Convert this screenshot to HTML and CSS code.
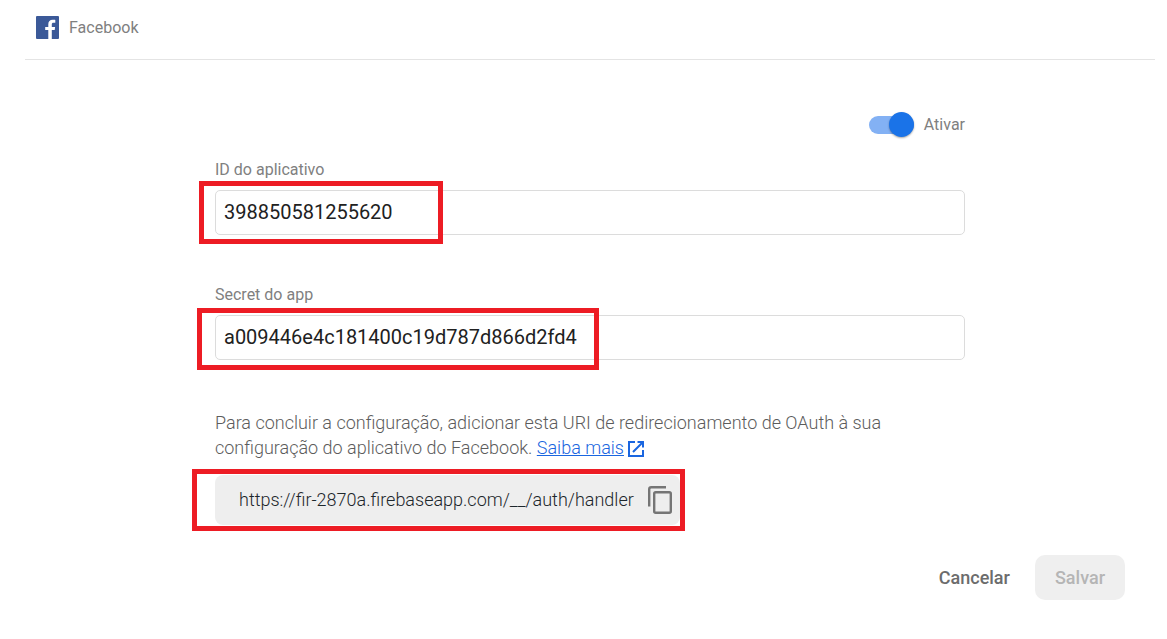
FILE: index.html
```html
<!DOCTYPE html>
<html lang="pt-BR">
<head>
<meta charset="utf-8">
<meta name="viewport" content="width=device-width, initial-scale=1">
<title>Facebook</title>
<link rel="stylesheet" href="styles.css">
</head>
<body>
<main class="provider">
  <header class="provider-header">
    <svg class="logo" viewBox="0 0 23 23" aria-hidden="true">
      <rect width="23" height="23" rx="1" fill="#3b5998"/>
      <path fill="#fff" d="M12.300 23v-9H9.200v-3h3.100V8.300c0-2.800 1.700-4.500 4.300-4.500 1.200 0 2.300.1 2.700.15v2.900h-1.700c-1.400 0-1.800.65-1.800 1.700V11h3.300l-.4 3h-2.900v9z"/>
    </svg>
    <span>Facebook</span>
  </header>
  <form class="provider-form">
    <div class="fields">
      <label class="toggle">
        <input class="switch" type="checkbox" role="switch" checked>
        <span>Ativar</span>
      </label>
      <div class="field">
        <label class="field-label" for="app-id">ID do aplicativo</label>
        <div class="marked">
          <input class="text-input" id="app-id" type="text" value="398850581255620">
          <span class="mark mark-id"></span>
        </div>
      </div>
      <div class="field">
        <label class="field-label" for="app-secret">Secret do app</label>
        <div class="marked">
          <input class="text-input" id="app-secret" type="text" value="a009446e4c181400c19d787d866d2fd4">
          <span class="mark mark-secret"></span>
        </div>
      </div>
      <p class="hint">Para concluir a configuração, adicionar esta URI de redirecionamento de OAuth à sua configuração do aplicativo do Facebook. <a class="more" href="#">Saiba mais<svg class="open-icon" viewBox="0 0 16 16" aria-hidden="true"><path fill="none" stroke="currentColor" stroke-width="2" d="M7 1H1v14h14V9M9.500 1H15v5.500M15 1 5 11"/></svg></a></p>
      <div class="uri">
        <span>https://fir-2870a.firebaseapp.com/__/auth/handler</span>
        <button class="copy" type="button" aria-label="Copiar">
          <svg class="copy-icon" viewBox="0 0 24 28" aria-hidden="true"><g fill="none" stroke="#757575" stroke-width="2.400"><path d="M1.200 20.500V3.200q0-2 2-2H18"/><rect x="6.200" y="6.200" width="16.600" height="20.600" rx="1.500"/></g></svg>
        </button>
        <span class="mark mark-uri"></span>
      </div>
    </div>
    <div class="actions">
      <button class="button" type="button">Cancelar</button>
      <button class="button button-save" type="submit" disabled>Salvar</button>
    </div>
  </form>
</main>
</body>
</html>
```
FILE: styles.css
```css
* {
  box-sizing: border-box;
}

body {
  margin: 0;
  background: #fff;
  color: #808080;
  font: 16px/20px Roboto, sans-serif;
}

.provider {
  margin: 0 12px 0 25px;
}

.provider-header {
  display: flex;
  align-items: center;
  gap: 10px;
  height: 60px;
  padding: 0 11px 4px;
  border-bottom: 1px solid #e4e4e4;
}

.logo {
  width: 23px;
  height: 23px;
}

.provider-form {
  padding-top: 53px;
}

.fields {
  max-width: 750px;
  margin: 0 auto;
}

.toggle {
  display: flex;
  align-items: center;
  justify-content: flex-end;
  gap: 10px;
  height: 24px;
  margin-bottom: 23px;
}

.switch {
  appearance: none;
  position: relative;
  width: 45px;
  height: 18px;
  margin: 0;
  border-radius: 9px;
  background: #83b1f4;
}

.switch::after {
  content: "";
  position: absolute;
  top: -4px;
  right: 0;
  width: 25px;
  height: 25px;
  border-radius: 50%;
  background: #1a73e8;
  box-shadow: 0 1px 2px rgba(0, 0, 0, 0.35);
}

.field {
  margin-bottom: 50px;
}

.field-label {
  display: block;
  margin-bottom: 10px;
}

.marked {
  position: relative;
}

.text-input {
  display: block;
  width: 100%;
  height: 45px;
  padding: 0 8px 2px;
  border: 1px solid #dcdcdc;
  border-radius: 5px;
  background: #fff;
  color: #212121;
  font: 20px Roboto, sans-serif;
}

.mark {
  position: absolute;
  border: 5px solid #ed1c24;
  pointer-events: none;
}

.mark-id {
  top: -9px;
  left: -16px;
  width: 244px;
  height: 63px;
}

.mark-secret {
  top: -7px;
  left: -18px;
  width: 402px;
  height: 62px;
}

.mark-uri {
  top: -6px;
  right: -5px;
  bottom: -6px;
  left: -23px;
}

.hint {
  max-width: 690px;
  margin: 0 0 15px;
  color: #5c5c5c;
  font-size: 18px;
  font-weight: 300;
  line-height: 25px;
}

.more {
  color: #1a66e0;
  white-space: nowrap;
}

.open-icon {
  width: 16px;
  height: 16px;
  margin-left: 4px;
  vertical-align: -3px;
}

.uri {
  position: relative;
  display: flex;
  align-items: center;
  gap: 14px;
  width: fit-content;
  height: 50px;
  padding: 0 8px 0 24px;
  border-radius: 8px;
  background: #eee;
  color: #1c262b;
  font-size: 18px;
  font-weight: 300;
}

.copy {
  display: flex;
  padding: 0;
  border: 0;
  background: none;
}

.copy-icon {
  width: 24px;
  height: 28px;
}

.actions {
  display: flex;
  justify-content: flex-end;
  gap: 5px;
  padding: 30px 30px 39px;
}

.button {
  height: 45px;
  padding: 0 20px;
  border: 0;
  border-radius: 10px;
  background: none;
  color: #6c6c6c;
  font: 500 18px Roboto, sans-serif;
}

.button-save {
  background: #efefef;
  color: #b5b5b5;
}
```
